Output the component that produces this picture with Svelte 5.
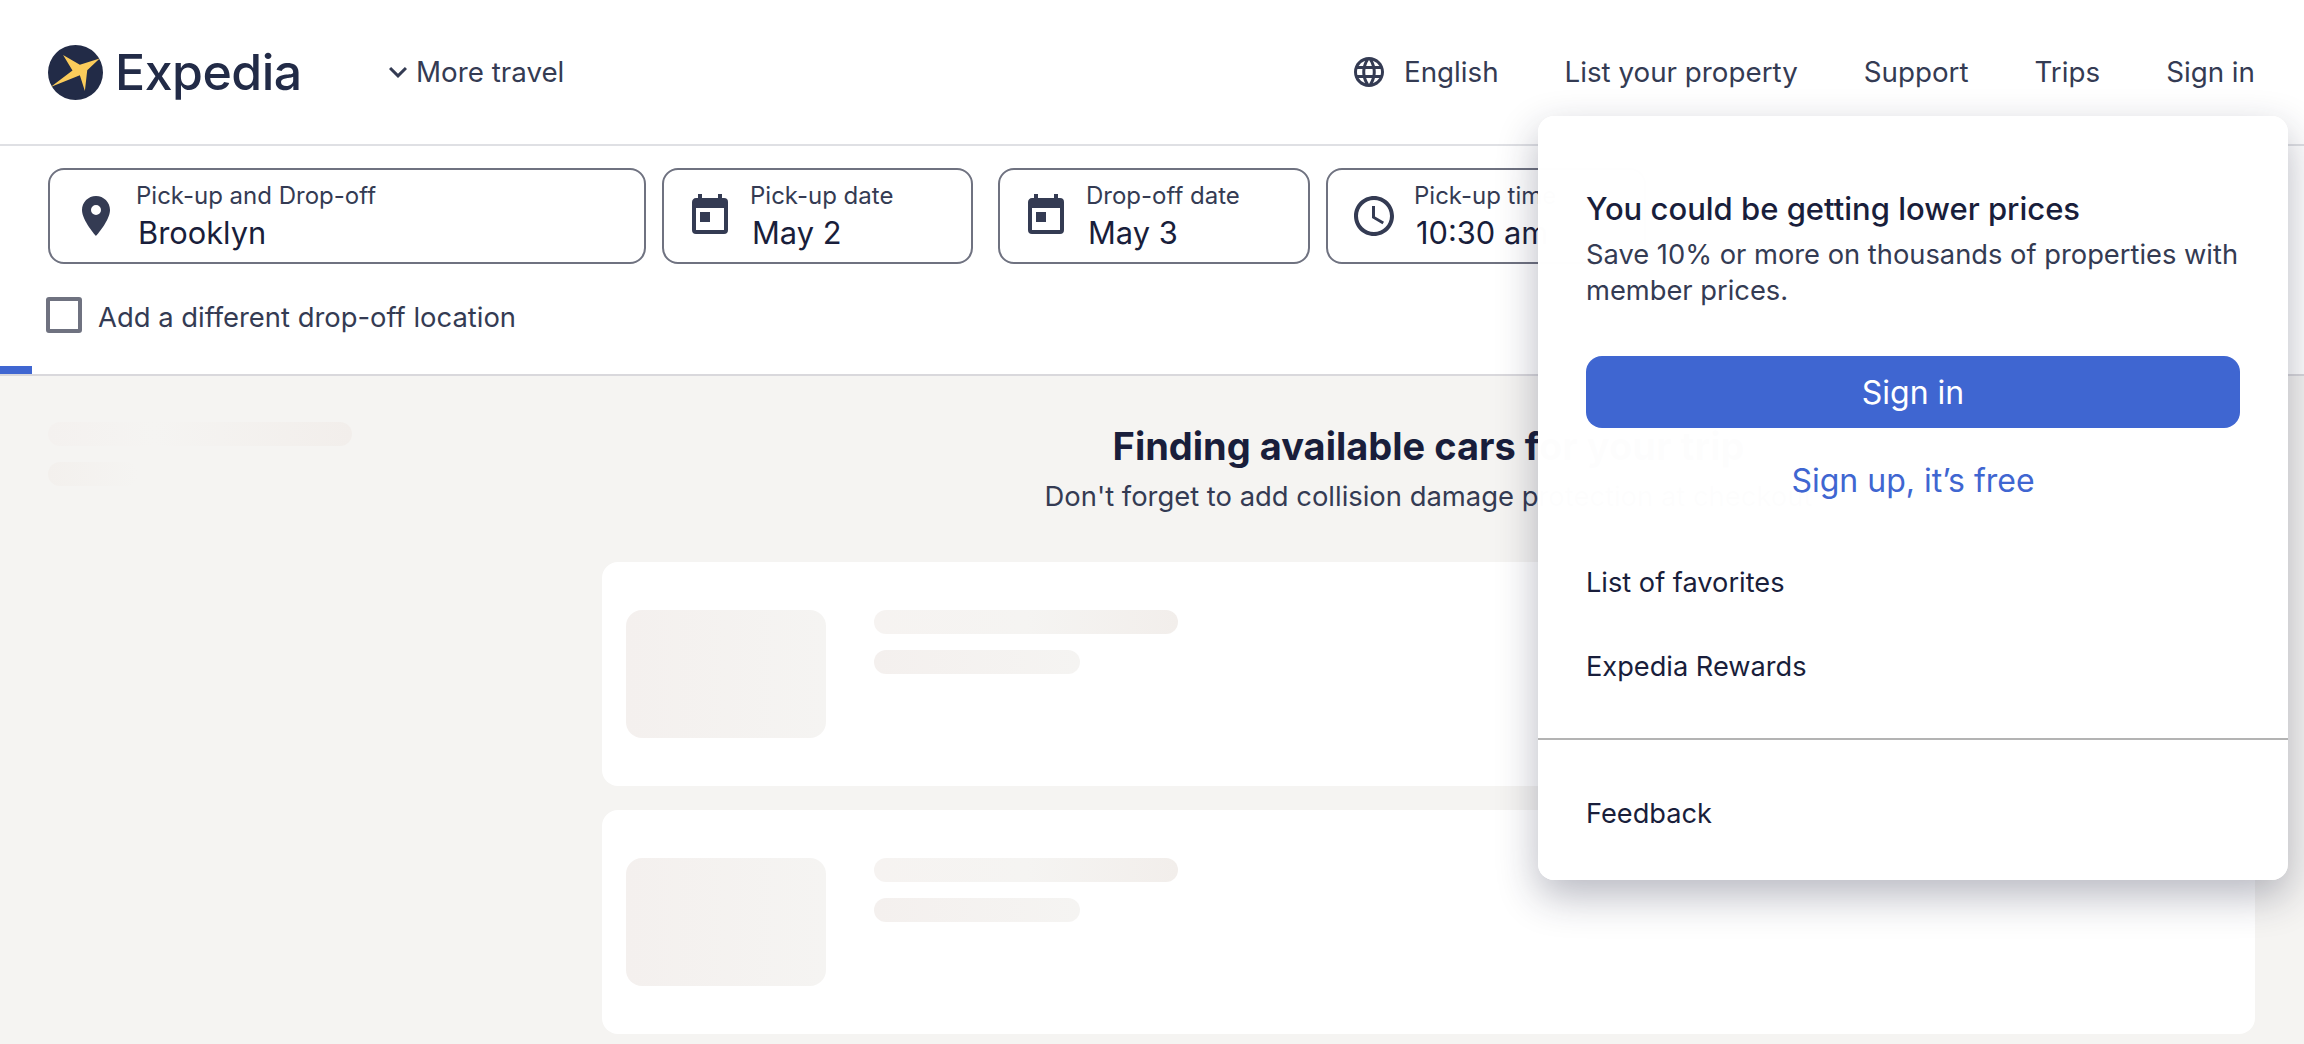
<script>
  const navLinks = ['List your property', 'Support', 'Trips', 'Sign in'];
  const calendar = 'M19 3h-1V1h-2v2H8V1H6v2H5c-1.11 0-1.99.9-1.99 2L3 19a2 2 0 0 0 2 2h14a2 2 0 0 0 2-2V5a2 2 0 0 0-2-2zm0 16H5V8h14v11zM7 10h5v5H7z';
  const pin = 'M12 2C8.13 2 5 5.13 5 9c0 5.25 7 13 7 13s7-7.75 7-13c0-3.87-3.13-7-7-7zm0 9.5a2.5 2.5 0 0 1 0-5 2.5 2.5 0 0 1 0 5z';
  const clock = 'M11.99 2C6.47 2 2 6.48 2 12s4.47 10 9.99 10C17.52 22 22 17.52 22 12S17.52 2 11.99 2zM12 20c-4.42 0-8-3.58-8-8s3.58-8 8-8 8 3.58 8 8-3.58 8-8 8zm.5-13H11v6l5.25 3.15.75-1.23-4.5-2.67V7z';
  const globe = 'M11.99 2C6.47 2 2 6.48 2 12s4.47 10 9.99 10C17.52 22 22 17.52 22 12S17.52 2 11.99 2zm6.93 6h-2.95a15.65 15.65 0 0 0-1.38-3.56A8.03 8.03 0 0 1 18.92 8zM12 4.04c.83 1.2 1.48 2.53 1.91 3.96h-3.82c.43-1.43 1.08-2.76 1.91-3.96zM4.26 14C4.1 13.36 4 12.69 4 12s.1-1.36.26-2h3.38c-.08.66-.14 1.32-.14 2s.06 1.34.14 2H4.26zm.82 2h2.95c.32 1.25.78 2.45 1.38 3.56A7.987 7.987 0 0 1 5.08 16zm2.95-8H5.08a7.987 7.987 0 0 1 4.33-3.56A15.65 15.65 0 0 0 8.03 8zM12 19.96c-.83-1.2-1.48-2.53-1.91-3.96h3.82c-.43 1.43-1.08 2.76-1.91 3.96zM14.34 14H9.66c-.09-.66-.16-1.32-.16-2s.07-1.35.16-2h4.68c.09.65.16 1.32.16 2s-.07 1.34-.16 2zm.25 5.56c.6-1.11 1.06-2.31 1.38-3.56h2.95a8.03 8.03 0 0 1-4.33 3.56zM16.36 14c.08-.66.14-1.32.14-2s-.06-1.34-.14-2h3.38c.16.64.26 1.31.26 2s-.1 1.36-.26 2h-3.38z';

  const fields = [
    { label: 'Pick-up and Drop-off', value: 'Brooklyn', icon: pin, cls: 'place' },
    { label: 'Pick-up date', value: 'May 2', icon: calendar, cls: 'date' },
    { label: 'Drop-off date', value: 'May 3', icon: calendar, cls: 'date' },
    { label: 'Pick-up time', value: '10:30 am', icon: clock, cls: 'time' }
  ];
</script>

<div class="page">
  <header class="topbar">
    <a class="logo" href="#home">
      <svg class="logo-mark" viewBox="55 42 164 164" aria-hidden="true">
        <circle cx="137" cy="124" r="82" fill="#222b47" />
        <path d="M100 72 L150 101 L209 82 L172 117 L165 179 L150 132 L63 167 L128 118 Z" />
      </svg>
      <span class="logo-text">Expedia</span>
    </a>
    <button class="more">
      <svg viewBox="0 0 24 24" width="36" height="36"><path d="M16.59 8.59 12 13.17 7.41 8.59 6 10l6 6 6-6z" /></svg>
      More travel
    </button>
    <nav class="nav">
      <span class="lang">
        <svg viewBox="0 0 24 24" width="36" height="36"><path d={globe} /></svg>
        English
      </span>
      {#each navLinks as link}
        <span>{link}</span>
      {/each}
    </nav>
  </header>

  <section class="search">
    <div class="fields">
      {#each fields as f}
        <div class="field {f.cls}">
          <svg viewBox="0 0 24 24" width="48" height="48"><path d={f.icon} /></svg>
          <div class="field-text">
            <span class="field-label">{f.label}</span>
            <span class="field-value">{f.value}</span>
          </div>
        </div>
      {/each}
    </div>
    <label class="check">
      <span class="box"></span>
      <span class="check-text">Add a different drop-off location</span>
    </label>
  </section>

  <div class="progress"><div class="progress-fill"></div></div>

  <main class="results">
    <aside class="filters">
      <div class="skel side-a"></div>
      <div class="skel side-b"></div>
    </aside>
    <div class="list">
      <div class="intro">
        <h1>Finding available cars for your trip</h1>
        <p>Don't forget to add collision damage protection at checkout</p>
      </div>
      {#each [1, 2] as card}
        <div class="card">
          <div class="skel thumb"></div>
          <div class="lines">
            <div class="skel line-a"></div>
            <div class="skel line-b"></div>
          </div>
        </div>
      {/each}
    </div>
  </main>

  <div class="popover">
    <div class="pop-top">
      <h2>You could be getting lower prices</h2>
      <p>Save 10% or more on thousands of properties with member prices.</p>
      <button class="signin">Sign in</button>
      <a class="signup" href="#signup">Sign up, it’s free</a>
    </div>
    <ul class="pop-links">
      <li>List of favorites</li>
      <li>Expedia Rewards</li>
    </ul>
    <div class="pop-foot">Feedback</div>
  </div>
</div>

<style>
  :global(body) {
    margin: 0;
    background: #f5f4f2;
  }

  .page {
    position: relative;
    width: 2304px;
    height: 1044px;
    overflow: hidden;
    font-family: Inter, "Liberation Sans", sans-serif;
    color: #343b53;
  }

  svg path {
    fill: #343b53;
  }

  .logo-mark path {
    fill: #fbcc5b;
  }

  .topbar {
    display: flex;
    align-items: center;
    height: 144px;
    padding: 0 49px 0 48px;
    background: #fff;
    border-bottom: 2px solid #dfe0e4;
    font-size: 27.75px;
  }

  .logo {
    display: flex;
    align-items: center;
    gap: 12px;
    width: 332px;
    text-decoration: none;
  }

  .logo-mark {
    width: 55px;
    height: 55px;
  }

  .logo-text {
    font-size: 50px;
    font-weight: 500;
    letter-spacing: -0.5px;
    color: #222b47;
  }

  .more {
    display: flex;
    align-items: center;
    padding: 0;
    border: 0;
    background: none;
    font: inherit;
    color: inherit;
  }

  .nav {
    display: flex;
    align-items: center;
    gap: 66px;
    margin-left: auto;
  }

  .lang {
    display: flex;
    align-items: center;
    gap: 17px;
  }

  .search {
    height: 228px;
    padding-top: 22px;
    box-sizing: border-box;
    background: #fff;
    padding-left: 48px;
  }

  .fields {
    display: flex;
    gap: 16px;
  }

  .field {
    display: flex;
    align-items: center;
    gap: 16px;
    box-sizing: border-box;
    height: 96px;
    padding-left: 22px;
    border: 2px solid #6f7280;
    border-radius: 16px;
    background: #fff;
  }

  .place { width: 598px; }
  .date { width: 311px; }
  .date + .date { width: 312px; margin-left: 9px; }
  .time { width: 320px; }

  .field-text {
    display: flex;
    flex-direction: column;
    gap: 3px;
    padding-bottom: 1px;
  }

  .field-label {
    font-size: 24px;
    line-height: 32px;
  }

  .field-value {
    font-size: 30.8px;
    line-height: 36px;
    color: #191e3b;
    margin-left: 2px;
  }

  .check {
    display: flex;
    align-items: center;
    gap: 16px;
    margin: 31px 0 0 -2px;
    font-size: 27.4px;
  }

  .check-text {
    line-height: 36px;
    padding-top: 4px;
  }

  .box {
    box-sizing: border-box;
    width: 36px;
    height: 36px;
    border: 4px solid #6f7280;
    border-radius: 3px;
  }

  .progress {
    height: 10px;
    margin-top: -8px;
    background: none;
    position: relative;
    box-sizing: border-box;
    border-bottom: 2px solid #d9d8dc;
  }

  .progress-fill {
    width: 32px;
    height: 8px;
    background: #3f66d1;
  }

  .results {
    display: flex;
    padding: 46px 49px 0 48px;
  }

  .filters {
    width: 554px;
    flex: none;
  }

  .list {
    flex: 1;
  }

  .intro {
    text-align: center;
    height: 140px;
  }

  h1 {
    margin: 0;
    font-size: 38px;
    line-height: 48px;
    font-weight: 700;
    color: #191e3b;
  }

  .intro p {
    margin: 8px 0 0;
    font-size: 27.4px;
    line-height: 36px;
  }

  .skel {
    background: linear-gradient(90deg, #f6f3f1 0%, #f5f4f2 50%, #f2eeeb 100%);
    border-radius: 12px;
  }

  .side-a {
    width: 304px;
    height: 24px;
    background: linear-gradient(90deg, #f4f1ef 0%, #f5f4f2 35%, #f2eeeb 100%);
  }

  .side-b {
    width: 90px;
    height: 24px;
    margin-top: 16px;
    background: linear-gradient(90deg, #f3f0ed 0%, #f5f4f2 100%);
  }

  .card {
    display: flex;
    gap: 48px;
    box-sizing: border-box;
    height: 224px;
    margin-bottom: 24px;
    padding: 48px 24px;
    background: #fff;
    border-radius: 16px;
  }

  .thumb {
    width: 200px;
    height: 128px;
    border-radius: 16px;
    background: linear-gradient(90deg, #f4f0ee 0%, #f5f4f2 100%);
  }

  .lines {
    display: flex;
    flex-direction: column;
    gap: 16px;
  }

  .line-a {
    width: 304px;
    height: 24px;
  }

  .line-b {
    width: 206px;
    height: 24px;
    background: linear-gradient(90deg, #f4f0ee 0%, #f5f4f2 100%);
  }

  .popover {
    position: absolute;
    top: 116px;
    left: 1538px;
    width: 750px;
    height: 764px;
    box-sizing: border-box;
    background: rgba(255, 255, 255, 0.993);
    border-radius: 16px;
    box-shadow: 0 16px 40px rgba(25, 30, 59, 0.31);
    color: #191e3b;
    font-size: 27.2px;
  }

  .pop-top {
    padding: 73px 48px 0;
    display: flex;
    flex-direction: column;
  }

  h2 {
    margin: 0;
    font-size: 31px;
    line-height: 40px;
    font-weight: 500;
  }

  .pop-top p {
    margin: 8px 0 0;
    font-size: 27.3px;
    line-height: 36px;
    color: #343b53;
  }

  .signin {
    height: 72px;
    margin-top: 47px;
    border: 0;
    border-radius: 16px;
    background: #3f66d1;
    color: #fff;
    font: inherit;
    font-size: 32px;
  }

  .signup {
    margin-top: 33px;
    text-align: center;
    font-size: 32px;
    line-height: 40px;
    color: #3f66d1;
    text-decoration: none;
  }

  .pop-links {
    list-style: none;
    margin: 0;
    padding: 62px 48px 0;
  }

  .pop-links li {
    line-height: 40px;
    margin-bottom: 44px;
  }

  .pop-links li:last-child {
    margin-bottom: 51px;
  }

  .pop-foot {
    padding: 54px 48px 0;
    border-top: 2px solid #b3b3b3;
    line-height: 40px;
  }
</style>
